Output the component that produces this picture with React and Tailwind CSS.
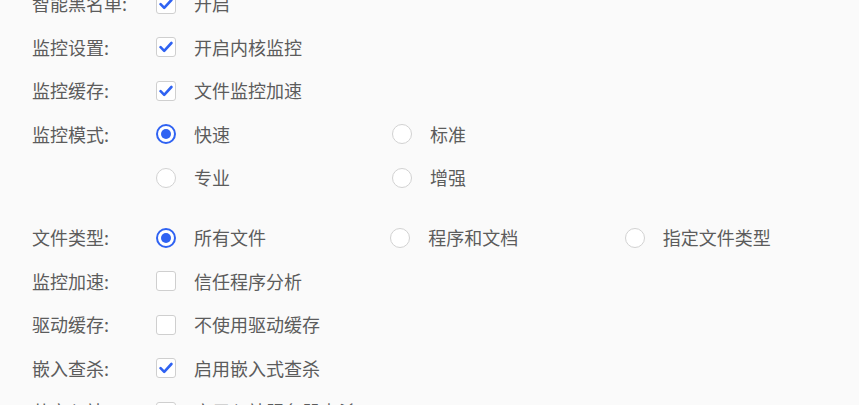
const Check = ({ on }) => (
  <span className="flex h-[20px] w-[20px] shrink-0 items-center justify-center rounded-[3px] border border-[#cfcfcf] bg-white">
    {on && (
      <svg width="14" height="12" viewBox="0 0 14 12" fill="none">
        <path d="M1.6 6.2 L5.2 9.8 L12.4 2" stroke="#2f62f2" strokeWidth="2.6" strokeLinecap="round" strokeLinejoin="round" />
      </svg>
    )}
  </span>
);

const Radio = ({ on }) =>
  on ? (
    <span className="flex h-[20px] w-[20px] shrink-0 items-center justify-center rounded-full border-2 border-[#2f62f2] bg-white">
      <span className="h-[10px] w-[10px] rounded-full bg-[#2f62f2]" />
    </span>
  ) : (
    <span className="h-[20px] w-[20px] shrink-0 rounded-full border-[1.5px] border-[#d2d2d2] bg-white" />
  );

function Row({ label, children }) {
  return (
    <div className="flex h-[43.5px] items-center">
      <div className="w-[124px] shrink-0">{label}</div>
      {children}
    </div>
  );
}

function CheckRow({ label, text, on }) {
  return (
    <Row label={label}>
      <Check on={on} />
      <span className="ml-[18px]">{text}</span>
    </Row>
  );
}

function Option({ text, on }) {
  return (
    <div className="flex w-[236px] items-center">
      <Radio on={on} />
      <span className="ml-[18px]">{text}</span>
    </div>
  );
}

export default function App() {
  return (
    <div
      className="h-[405px] w-[859px] overflow-hidden bg-[#fafafa] text-[18px] text-[#5c5c5c]"
      style={{ fontFamily: '"Noto Sans CJK SC", "Noto Sans", sans-serif' }}
    >
      <div className="-mt-[18px] pl-[32px]">
        <CheckRow label="智能黑名单:" text="开启" on />
        <CheckRow label="监控设置:" text="开启内核监控" on />
        <CheckRow label="监控缓存:" text="文件监控加速" on />
        <Row label="监控模式:">
          <Option text="快速" on />
          <Option text="标准" />
        </Row>
        <Row label="">
          <Option text="专业" />
          <Option text="增强" />
        </Row>
        <div className="h-[16.5px]" />
        <Row label="文件类型:">
          <Option text="所有文件" on />
          <Option text="程序和文档" />
          <Option text="指定文件类型" />
        </Row>
        <CheckRow label="监控加速:" text="信任程序分析" />
        <CheckRow label="驱动缓存:" text="不使用驱动缓存" />
        <CheckRow label="嵌入查杀:" text="启用嵌入式查杀" on />
        <CheckRow label="共享入站:" text="启用入站服务器查杀" />
      </div>
    </div>
  );
}
